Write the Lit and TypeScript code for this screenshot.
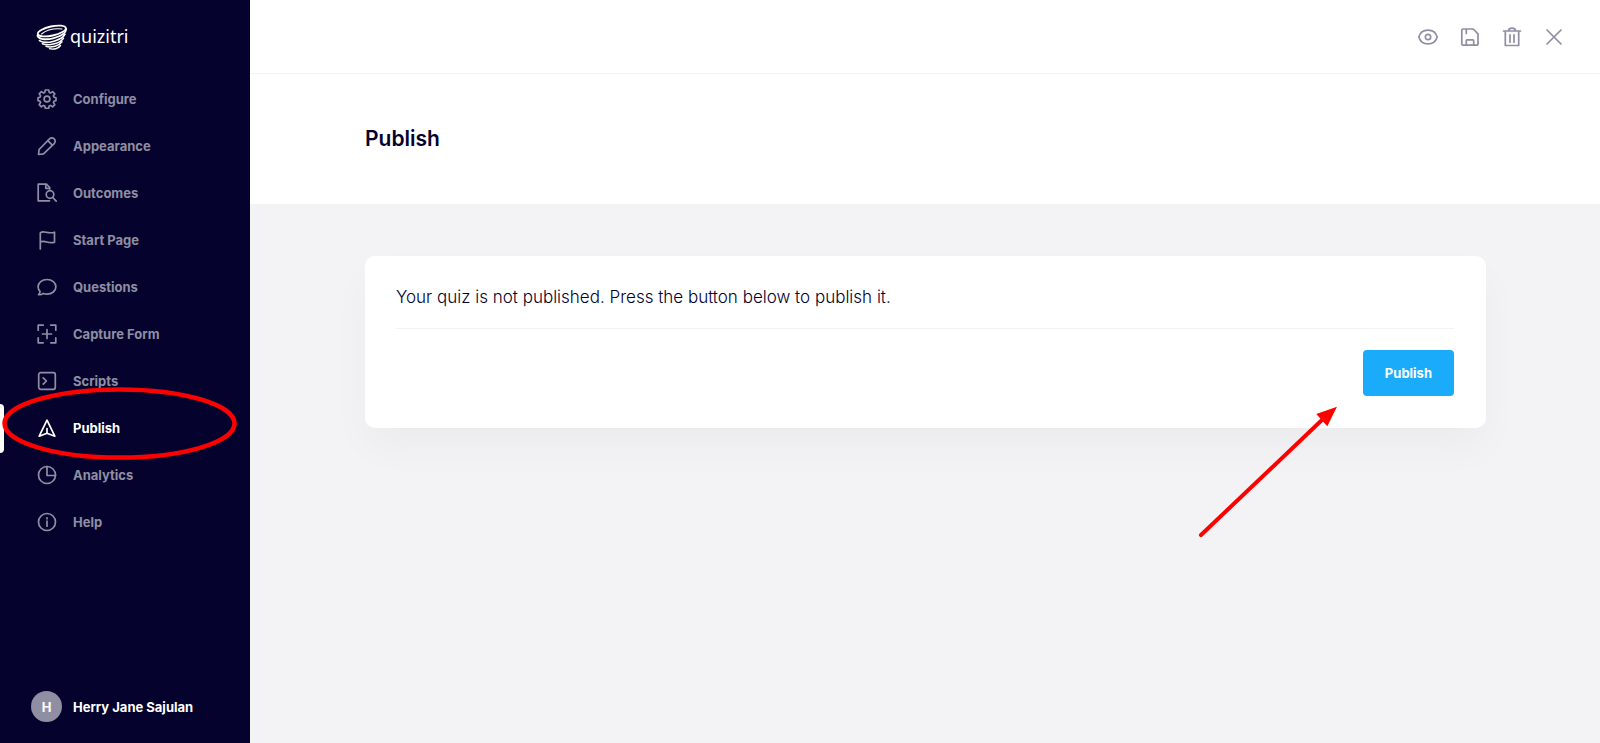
import { LitElement, html, css, svg, nothing } from "lit";
import { customElement, property } from "lit/decorators.js";

const icons = {
  configure: svg`<path d="M8.300 1h3.400l.5 2.400 1.300.6 2.100-1.400 2.200 2.200-1.400 2.100.6 1.300 2 .5v2.900l-2 .6-.6 1.300 1.400 2.100-2.200 2.200-2.100-1.400-1.300.6-.5 2.300H8.300l-.5-2.300-1.300-.6-2.100 1.400-2.200-2.200 1.400-2.100-.6-1.300-2-.6V8.700l2-.5.6-1.300-1.400-2.100 2.200-2.200 2.100 1.400 1.300-.6z"/><circle cx="10" cy="10" r="2.900"/>`,
  appearance: svg`<path d="M1.500 18.500l.6-5L12.500 2.900a3.300 3.300 0 0 1 4.700 4.700L6.500 17.900z"/><path d="M10.800 4.700l4.500 4.500"/>`,
  outcomes: svg`<path d="M12.500 17.800H1.200V1.200h8.300l3.200 3.300v1.500"/><path d="M8.800 1.500v3.800h3.600"/><circle cx="13" cy="11.500" r="3.800"/><path d="M15.800 14.500l3.400 3.700"/>`,
  start: svg`<path d="M3.300 19V2.800c3.500-2.800 7 1.500 14.200-.6v10c-6 2.200-9.500-2.700-14.200-.2"/>`,
  questions: svg`<path d="M10 2.500c5 0 8.900 3.200 8.900 7.300s-3.900 7.300-8.900 7.300c-1.300 0-2.600-.2-3.700-.7-1.300 1-2.900 1.500-4.800 1.300 1-.9 1.500-2 1.500-3.300-1.200-1.200-1.900-2.800-1.900-4.600 0-4.100 3.900-7.300 8.900-7.300z"/>`,
  capture: svg`<path d="M1.200 6.200v-5h5M13.800 1.200h5v5M18.800 13.800v5h-5M6.200 18.800h-5v-5M10 5.500v9M5.500 10h9"/>`,
  scripts: svg`<rect x="1.700" y="1.700" width="16.600" height="16.600" rx="2"/><path d="M6.200 6.800L9.400 10l-3.200 3.200"/>`,
  publish: svg`<path d="M10 2.200l7.800 16-7.800-3-7.800 3z"/><path d="M10 10.500v4.500"/>`,
  analytics: svg`<circle cx="10" cy="10" r="8.500"/><path d="M10 1.500V10.500h8.500"/>`,
  help: svg`<circle cx="10" cy="10" r="8.500"/><path d="M10 9.200v5M10 5.800v1"/>`,
  eye: svg`<path d="M.8 10c1.200-4.200 4.900-6.900 9.200-6.900s8 2.700 9.200 6.900c-1.200 4.200-4.900 6.900-9.200 6.900S2 14.200.8 10z"/><circle cx="10" cy="10" r="2.700"/>`,
  save: svg`<path d="M3 2h10.300l4.700 4.800V17a1.200 1.200 0 0 1-1.200 1.200H3A1.200 1.200 0 0 1 1.800 17V3.200A1.200 1.200 0 0 1 3 2zM6.300 2.300V6.500M6.300 18v-4.200a.9.900 0 0 1 .9-.9h5.600a.9.900 0 0 1 .9.900V18"/>`,
  trash: svg`<path d="M1.500 4h17M3.300 4.200v14.300h13.400V4.200M6.500 3.800c.2-2 1.200-2.700 3.500-2.700s3.300.7 3.500 2.700M8 7.800v7.400M12 7.800v7.400"/>`,
  close: svg`<path d="M3 3l14 14M17 3L3 17"/>`,
};

type IconName = keyof typeof icons;

@customElement("line-icon")
class LineIcon extends LitElement {
  @property() name: IconName = "help";

  static styles = css`
    :host {
      display: block;
      flex: none;
      width: 20px;
      height: 20px;
    }
    .glyph {
      display: block;
      width: 100%;
      height: 100%;
      fill: none;
      stroke: currentColor;
      stroke-width: 1.7;
      stroke-linecap: round;
      stroke-linejoin: round;
    }
  `;

  render() {
    return html`<svg class="glyph" viewBox="0 0 20 20" aria-hidden="true">${icons[this.name]}</svg>`;
  }
}

const links: { icon: IconName; label: string }[] = [
  { icon: "configure", label: "Configure" },
  { icon: "appearance", label: "Appearance" },
  { icon: "outcomes", label: "Outcomes" },
  { icon: "start", label: "Start Page" },
  { icon: "questions", label: "Questions" },
  { icon: "capture", label: "Capture Form" },
  { icon: "scripts", label: "Scripts" },
  { icon: "publish", label: "Publish" },
  { icon: "analytics", label: "Analytics" },
  { icon: "help", label: "Help" },
];

const tools: { icon: IconName; label: string }[] = [
  { icon: "eye", label: "Preview" },
  { icon: "save", label: "Save" },
  { icon: "trash", label: "Delete" },
  { icon: "close", label: "Close" },
];

@customElement("side-bar")
class SideBar extends LitElement {
  @property() current = "Publish";

  static styles = css`
    :host {
      display: flex;
      flex-direction: column;
      box-sizing: border-box;
      padding-bottom: 21px;
      background: #05032d;
      color: #8f8ea3;
      font-size: 13px;
      font-weight: 700;
    }
    .brand {
      display: flex;
      align-items: center;
      gap: 2px;
      height: 73px;
      padding: 0 0 2px 36px;
      color: #fff;
      text-decoration: none;
      font: 400 18px/28px "Noto Sans", sans-serif;
    }
    .name {
      padding-bottom: 2px;
    }
    .mark {
      width: 32px;
      height: 26px;
      fill: none;
      stroke: currentColor;
      stroke-linecap: round;
    }
    .links {
      flex: 1;
      margin: 0;
      padding: 0;
      list-style: none;
    }
    .entry {
      position: relative;
    }
    .link {
      display: flex;
      align-items: center;
      gap: 16px;
      height: 47px;
      padding-left: 37px;
      color: inherit;
      text-decoration: none;
    }
    .current .link {
      color: #fff;
    }
    .current::before {
      content: "";
      position: absolute;
      left: 0;
      top: 0;
      bottom: -2px;
      width: 4px;
      border-radius: 0 4px 4px 0;
      background: #fff;
    }
    .ring {
      position: absolute;
      left: 0;
      top: -19px;
      width: 240px;
      height: 78px;
      fill: none;
      stroke: #fe0000;
      stroke-width: 4.5;
      pointer-events: none;
    }
    .user {
      display: flex;
      align-items: center;
      gap: 11px;
      padding-left: 31px;
      color: #fff;
    }
    .avatar {
      display: grid;
      place-items: center;
      width: 31px;
      height: 31px;
      border-radius: 50%;
      background: #8f8ea3;
    }
  `;

  render() {
    return html`
      <a class="brand" href="#">
        <svg class="mark" viewBox="0 0 32 26" aria-hidden="true">
          <ellipse cx="15.800" cy="7" rx="14.300" ry="4.600" stroke-width="1.800" transform="rotate(-12 15.800 7)" />
          <path d="M5.500 10C10 6.500 18 4.200 26 5" stroke-width="1.100" />
          <path d="M1.500 11.500c.8 4 8.500 4.600 15.500 2.800S30 9.500 30.200 5" stroke-width="1.900" />
          <path d="M3.500 16.600c3.500 2.400 9 2.100 14.500.6s9.500-4 11-7" stroke-width="1.700" />
          <path d="M6.500 19.700c3.500 1.600 7.900 1.200 11.900.1s7.500-3.100 9-5.500" stroke-width="1.600" />
          <path d="M10 22.300c2.500 1.100 6 .8 9 0s5.500-2.400 7-4.500" stroke-width="1.500" />
          <path d="M13.500 24.700c2 .7 4.300.5 6.300 0s3.700-1.700 4.700-3.200" stroke-width="1.400" />
        </svg>
        <span class="name">quizitri</span>
      </a>
      <ul class="links">
        ${links.map(({ icon, label }) => {
          const active = label === this.current;
          return html`<li class="entry ${active ? "current" : ""}">
            <a class="link" href="#" aria-current=${active ? "page" : nothing}>
              <line-icon name=${icon}></line-icon><span>${label}</span>
            </a>
            ${active
              ? html`<svg class="ring" viewBox="0 0 240 78" aria-hidden="true">
                  <ellipse cx="119.500" cy="38.500" rx="115" ry="34" />
                </svg>`
              : nothing}
          </li>`;
        })}
      </ul>
      <div class="user"><span class="avatar">H</span><span>Herry Jane Sajulan</span></div>
    `;
  }
}

@customElement("app-root")
class AppRoot extends LitElement {
  static styles = css`
    :host {
      display: grid;
      grid-template-columns: 250px minmax(0, 1fr);
      min-height: 100vh;
      background: #f3f3f6;
      color: #03012c;
      font-family: Inter, sans-serif;
    }
    .toolbar {
      display: flex;
      justify-content: flex-end;
      align-items: center;
      gap: 22px;
      height: 73px;
      padding-right: 36px;
      border-bottom: 1px solid #f3f3f6;
      background: #fff;
    }
    .tool {
      padding: 0;
      border: 0;
      background: none;
      color: #8f8ea3;
      cursor: pointer;
    }
    .heading {
      padding: 53px 114px 53px 115px;
      background: #fff;
    }
    .title {
      margin: 0;
      font-size: 21px;
      line-height: 24px;
      font-weight: 600;
    }
    .content {
      padding: 52px 114px 52px 115px;
    }
    .card {
      position: relative;
      padding: 29px 32px 32px 31px;
      border-radius: 10px;
      background: #fff;
      box-shadow: 0 20px 40px rgba(3, 1, 44, 0.03);
    }
    .message {
      margin: 0;
      padding-bottom: 19px;
      border-bottom: 1px solid #f3f3f6;
      font-size: 17px;
      line-height: 24px;
      font-weight: 300;
    }
    .actions {
      display: flex;
      justify-content: flex-end;
      padding-top: 21px;
    }
    .publish {
      height: 46px;
      padding: 0 22px;
      border: 0;
      border-radius: 4px;
      background: #1aabfa;
      color: #fff;
      font: 700 13px/20px Inter, sans-serif;
      cursor: pointer;
    }
    .arrow {
      position: absolute;
      top: 148px;
      right: 146px;
      width: 144px;
      height: 136px;
      pointer-events: none;
    }
  `;

  render() {
    return html`
      <side-bar current="Publish"></side-bar>
      <main>
        <header class="toolbar">
          ${tools.map(
            ({ icon, label }) => html`<button class="tool" aria-label=${label}>
              <line-icon name=${icon}></line-icon>
            </button>`
          )}
        </header>
        <div class="heading"><h1 class="title">Publish</h1></div>
        <div class="content">
          <section class="card">
            <p class="message">Your quiz is not published. Press the button below to publish it.</p>
            <div class="actions"><button class="publish">Publish</button></div>
            <svg class="arrow" viewBox="0 0 144 136" aria-hidden="true">
              <path d="M5 131L127 15" stroke="#fe0000" stroke-width="4" stroke-linecap="round" />
              <path d="M141 2.700L120.300 10l11 12.300z" fill="#fe0000" />
            </svg>
          </section>
        </div>
      </main>
    `;
  }
}
